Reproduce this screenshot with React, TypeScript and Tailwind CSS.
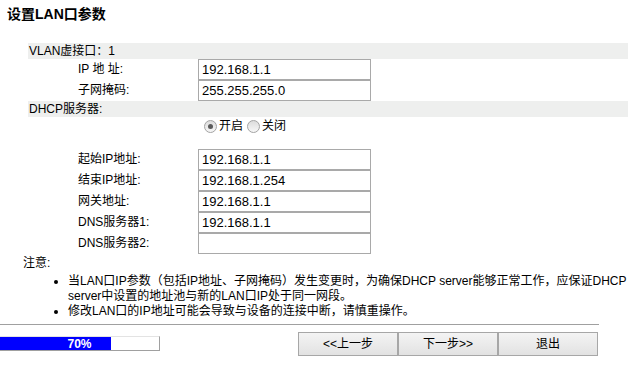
import React from "react";

const font = { fontFamily: '"Liberation Sans", Arial, "Noto Sans CJK SC", sans-serif' };

const InputRow = ({ label, value }: { label: string; value: string }) => (
  <div className="flex h-[21px] items-center">
    <div className="w-[170px] pl-[50px] text-[12px] leading-[21px]">{label}</div>
    <div className="h-[21px] w-[173px] border border-[#a9a9a9] bg-white pl-[3px] text-[13px] leading-[19px]">
      {value}
    </div>
  </div>
);

const Radio = ({ checked, label }: { checked?: boolean; label: string }) => (
  <label className="flex items-center">
    <span className="flex h-[13px] w-[13px] items-center justify-center rounded-full border border-[#a3a3a3] bg-linear-to-b from-[#dcdcdc] to-[#f7f7f7]">
      {checked && <span className="h-[5px] w-[5px] rounded-full bg-[#5a5a5a]" />}
    </span>
    <span className="ml-[2px] text-[12px]">{label}</span>
  </label>
);

const Button = ({ children }: { children: React.ReactNode }) => (
  <button className="h-[24px] w-[100px] border border-[#a7a7a7] bg-linear-to-b from-[#f4f4f4] to-[#e2e2e2] text-[12px] text-black">
    {children}
  </button>
);

export default function App() {
  return (
    <div className="relative h-[373px] w-[632px] bg-white text-black" style={font}>
      <h1 className="pl-[7px] pt-[6px] text-[14px] font-bold leading-[16px]">设置LAN口参数</h1>

      <div className="ml-[28px] mt-[21px] w-[600px]">
        <div className="h-[16px] bg-[#eeefee] pl-[1px] text-[12px] leading-[16px]">VLAN虚接口：1</div>
        <InputRow label="IP 地 址:" value="192.168.1.1" />
        <InputRow label="子网掩码:" value="255.255.255.0" />
        <div className="h-[16px] bg-[#eeefee] pl-[1px] text-[12px] leading-[16px]">DHCP服务器:</div>
        <div className="flex h-[18px] items-center gap-[4px] pl-[176px]">
          <Radio checked label="开启" />
          <Radio label="关闭" />
        </div>
        <div className="mt-[14px]">
          <InputRow label="起始IP地址:" value="192.168.1.1" />
          <InputRow label="结束IP地址:" value="192.168.1.254" />
          <InputRow label="网关地址:" value="192.168.1.1" />
          <InputRow label="DNS服务器1:" value="192.168.1.1" />
          <InputRow label="DNS服务器2:" value="" />
        </div>
      </div>

      <div className="ml-[23px] mt-[2px] text-[12px] leading-[15px]">
        <p>注意:</p>
        <ul className="mt-[3px] list-disc pl-[45px] whitespace-nowrap">
          <li>
            当LAN口IP参数（包括IP地址、子网掩码）发生变更时，为确保DHCP server能够正常工作，应保证DHCP
            <br />
            server中设置的地址池与新的LAN口IP处于同一网段。
          </li>
          <li>修改LAN口的IP地址可能会导致与设备的连接中断，请慎重操作。</li>
        </ul>
      </div>

      <div className="mt-[5px] h-px w-[599px] bg-[#a0a0a0]" />

      <div className="mt-[7px] flex items-start">
        <div className="relative mt-[4px] h-[15px] w-[160px] border-t border-r border-b border-t-[#e3e3e3] border-r-[#a0a0a0] border-b-[#a0a0a0] bg-white">
          <div className="h-full w-[111px] bg-[#0000ff]" />
          <div className="absolute inset-0 flex items-center justify-center text-[12px] font-bold text-white">
            70%
          </div>
        </div>
        <div className="ml-[138px] flex">
          <Button>&lt;&lt;上一步</Button>
          <Button>下一步&gt;&gt;</Button>
          <Button>退出</Button>
        </div>
      </div>
    </div>
  );
}
